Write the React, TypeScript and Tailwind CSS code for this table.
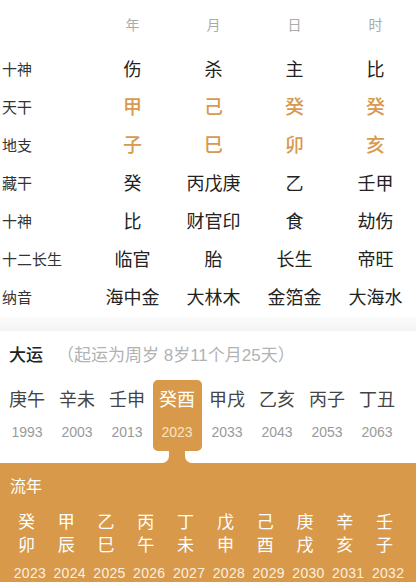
const orange = "#d8994a";

const rows = [
  { label: "十神", values: ["伤", "杀", "主", "比"] },
  { label: "天干", values: ["甲", "己", "癸", "癸"], accent: true },
  { label: "地支", values: ["子", "巳", "卯", "亥"], accent: true },
  { label: "藏干", values: ["癸", "丙戊庚", "乙", "壬甲"] },
  { label: "十神", values: ["比", "财官印", "食", "劫伤"] },
  { label: "十二长生", values: ["临官", "胎", "长生", "帝旺"] },
  { label: "纳音", values: ["海中金", "大林木", "金箔金", "大海水"] },
];

const dayun = [
  ["庚午", "1993"],
  ["辛未", "2003"],
  ["壬申", "2013"],
  ["癸酉", "2023"],
  ["甲戌", "2033"],
  ["乙亥", "2043"],
  ["丙子", "2053"],
  ["丁丑", "2063"],
];

const liunian = [
  ["癸", "卯", "2023"],
  ["甲", "辰", "2024"],
  ["乙", "巳", "2025"],
  ["丙", "午", "2026"],
  ["丁", "未", "2027"],
  ["戊", "申", "2028"],
  ["己", "酉", "2029"],
  ["庚", "戌", "2030"],
  ["辛", "亥", "2031"],
  ["壬", "子", "2032"],
];

export default function App() {
  return (
    <div className="w-[416px] h-[582px] overflow-hidden bg-white flex flex-col font-['Liberation_Sans','Noto_Sans_CJK_SC',sans-serif]">
      {/* Pillars table */}
      <div className="grid grid-cols-[92px_repeat(4,81px)] h-[51px] items-center text-[14px] text-[#ababab]">
        <div />
        {["年", "月", "日", "时"].map((h) => (
          <div key={h} className="text-center">
            {h}
          </div>
        ))}
      </div>
      {rows.map((r, i) => (
        <div key={i} className="grid grid-cols-[92px_repeat(4,81px)] h-[38px] items-center">
          <div className="pl-[2px] text-[15px] text-[#333]">{r.label}</div>
          {r.values.map((v, j) => (
            <div
              key={j}
              className={
                r.accent
                  ? "text-center text-[19px] font-medium text-[#d79a50]"
                  : "text-center text-[18px] text-[#222]"
              }
            >
              {v}
            </div>
          ))}
        </div>
      ))}

      <div className="h-[14px] bg-gradient-to-b from-[#fbfbfb] to-[#f4f4f4]" />

      {/* Da yun */}
      <div className="h-[49px] flex items-center pl-[9px]">
        <span className="text-[17px] font-medium text-[#222]">大运</span>
        <span className="ml-[14px] text-[17px] text-[#b2b2b2]">（起运为周岁 8岁11个月25天）</span>
      </div>
      <div className="grid grid-cols-[repeat(8,50px)] pl-[2px]">
        {dayun.map(([gz, year], i) => {
          const active = i === 3;
          return (
            <div key={year} className="flex justify-center">
              <div
                className={
                  "w-[49px] h-[71px] flex flex-col items-center rounded-[5px] " +
                  (active ? "bg-[#d8994a]" : "")
                }
              >
                <div className={"mt-[9px] h-[22px] leading-[22px] text-[18px] " + (active ? "text-white" : "text-[#444]")}>
                  {gz}
                </div>
                <div className={"mt-[11px] h-[20px] leading-[20px] text-[14px] " + (active ? "text-[#f7e4c8]" : "text-[#9a9a9a]")}>
                  {year}
                </div>
              </div>
            </div>
          );
        })}
      </div>
      <div className="h-[12px] pl-[162px]">
        <svg width="30" height="12" viewBox="0 0 30 12" className="block">
          <path d="M0 12 A7 7 0 0 0 7 5 V0 H23 V5 A7 7 0 0 0 30 12 Z" fill={orange} />
        </svg>
      </div>

      {/* Liu nian */}
      <div className="flex-1 bg-[#d8994a] text-white">
        <div className="h-[48px] flex items-center pl-[10px] text-[16px]">流年</div>
        <div className="grid grid-cols-10 w-[398px] ml-[10px]">
          {liunian.map(([g, z, y]) => (
            <div key={y} className="flex flex-col items-center">
              <div className="pr-[7px] text-[17px] leading-[23px]">{g}</div>
              <div className="pr-[7px] text-[17px] leading-[23px]">{z}</div>
              <div className="mt-[8px] text-[14px] leading-[16px] text-[#fbf0e0] tracking-[0.3px]">{y}</div>
            </div>
          ))}
        </div>
      </div>
    </div>
  );
}
